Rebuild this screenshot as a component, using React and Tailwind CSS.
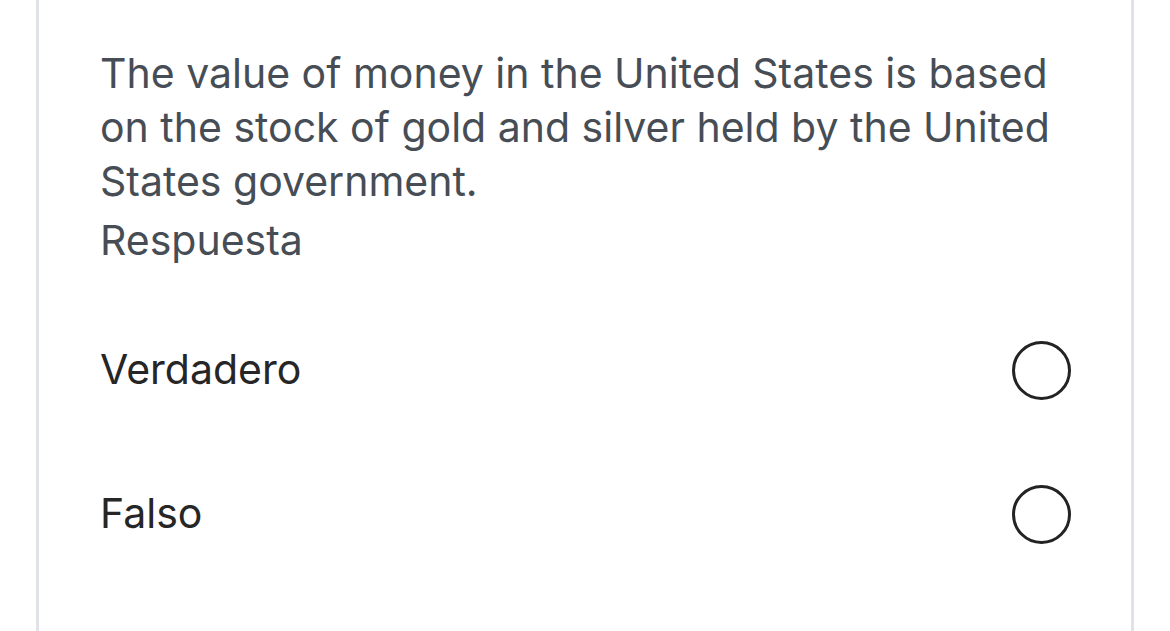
import React from 'react';

const options = ['Verdadero', 'Falso'];

const App = () => {
    return (
        <div className="w-[1170px] h-[631px] bg-white overflow-hidden" style={{ fontFamily: 'Inter, "Noto Sans", sans-serif' }}>
            <div className="ml-[36px] w-[1098px] h-full border-x-[3px] border-[#dfe3e8] pt-[46px] pl-[61px] pr-[60px]">
                <p className="text-[41px] leading-[54px] text-[#474d55]">
                    The value of money in the United States is based on the stock of gold and silver held by the United States government.
                </p>
                <p className="text-[41px] leading-[54px] mt-[5px] text-[#474d55]">Respuesta</p>

                <div className="mt-[31px]">
                    {options.map((opt) => (
                        <label key={opt} className="flex items-center justify-between h-[144px]">
                            <span className="text-[41px] text-[#262626]">{opt}</span>
                            <span className="w-[59px] h-[59px] rounded-full border-[3px] border-[#232323]"></span>
                        </label>
                    ))}
                </div>
            </div>
        </div>
    );
};

export default App;
